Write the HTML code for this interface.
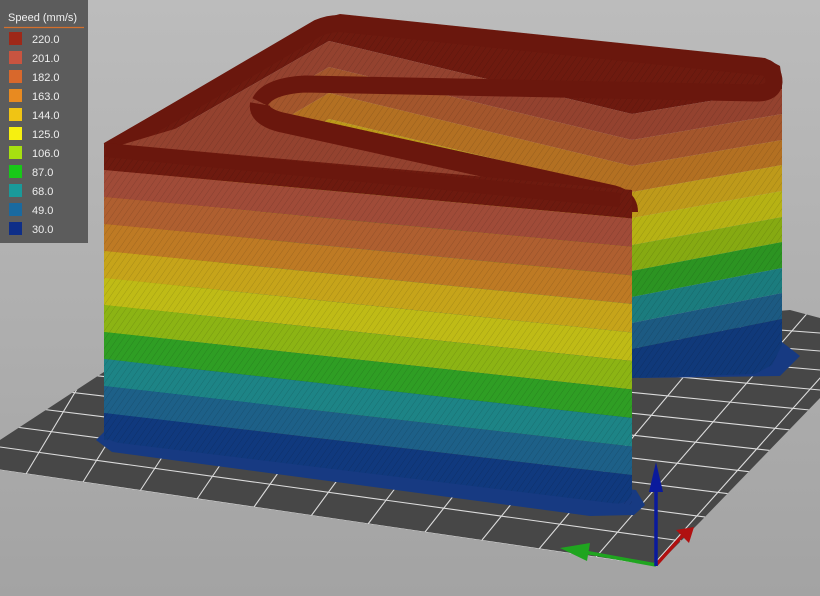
<!DOCTYPE html>
<html><head><meta charset="utf-8"><style>
html,body{margin:0;padding:0;width:820px;height:596px;overflow:hidden;background:#aaa}
svg{display:block}
</style></head><body>
<svg width="820" height="596" viewBox="0 0 820 596" xmlns="http://www.w3.org/2000/svg" font-family="Liberation Sans, sans-serif">
<defs>
<linearGradient id="bg" x1="0" y1="0" x2="0" y2="1"><stop offset="0" stop-color="#bcbcbc"/><stop offset="1" stop-color="#a3a3a3"/></linearGradient>
<clipPath id="plate"><polygon points="0,440 110,368 790,310 820,318 820,398 700,522 656,566 0,470"/></clipPath>
<clipPath id="sil"><polygon points="104,143 318,20 340,14 765,58 780,66 782,80 782,345 772,365 755,374 632,378 632,505 104,440"/></clipPath>
<pattern id="hatch" width="5" height="5" patternUnits="userSpaceOnUse" patternTransform="rotate(35)"><line x1="0" y1="0" x2="0" y2="5" stroke="#000" stroke-width="0.7" opacity="0.22"/></pattern>
</defs>
<rect width="820" height="596" fill="url(#bg)"/>
<polygon points="0,440 110,368 790,310 820,318 820,398 700,522 656,566 0,470" fill="#474747"/>
<g clip-path="url(#plate)" stroke="#dcdcdc" stroke-width="1.1" fill="none">
<line x1="0" y1="470" x2="820" y2="590"/><line x1="0" y1="447" x2="820" y2="560"/><line x1="0" y1="425" x2="820" y2="532"/><line x1="0" y1="404" x2="820" y2="505"/><line x1="0" y1="384" x2="820" y2="480"/><line x1="0" y1="365" x2="820" y2="456"/><line x1="0" y1="347" x2="820" y2="433"/><line x1="0" y1="330" x2="820" y2="411"/><line x1="0" y1="314" x2="820" y2="390"/><line x1="0" y1="299" x2="820" y2="370"/><line x1="0" y1="285" x2="820" y2="351"/><line x1="0" y1="272" x2="820" y2="333"/>
<line x1="26" y1="474" x2="206" y2="174"/><line x1="83" y1="482" x2="271" y2="182"/><line x1="140" y1="491" x2="336" y2="191"/><line x1="197" y1="499" x2="401" y2="199"/><line x1="254" y1="507" x2="466" y2="207"/><line x1="311" y1="516" x2="531" y2="216"/><line x1="368" y1="524" x2="596" y2="224"/><line x1="425" y1="532" x2="661" y2="232"/><line x1="482" y1="540" x2="726" y2="240"/><line x1="539" y1="549" x2="791" y2="249"/><line x1="596" y1="557" x2="856" y2="257"/><line x1="653" y1="565" x2="921" y2="265"/><line x1="710" y1="574" x2="986" y2="274"/><line x1="767" y1="582" x2="1051" y2="282"/>
</g>
<!-- brim -->
<polygon points="96,440 104,432 636,490 645,505 634,515 590,516 112,452" fill="#173a82"/>
<polygon points="628,372 782,342 800,356 780,376 640,378" fill="#173a82"/>
<g clip-path="url(#sil)">
<polygon points="104,-50 329,-50 632,-50 782,-50 782,89 632,114 329,41 104,170" fill="#6e1a0f"/>
<polygon points="104,170 329,41 632,114 782,89 782,114 632,140 329,67 104,197" fill="#94422f"/>
<polygon points="104,197 329,67 632,140 782,114 782,140 632,166 329,93 104,224" fill="#a4562c"/>
<polygon points="104,224 329,93 632,166 782,140 782,165 632,192 329,119 104,251" fill="#b37022"/>
<polygon points="104,251 329,119 632,192 782,165 782,191 632,218 329,145 104,278" fill="#be9a1a"/>
<polygon points="104,278 329,145 632,218 782,191 782,217 632,245 329,171 104,305" fill="#b6b214"/>
<polygon points="104,305 329,171 632,245 782,217 782,242 632,271 329,197 104,332" fill="#86aa12"/>
<polygon points="104,332 329,197 632,271 782,242 782,268 632,297 329,223 104,359" fill="#2c9422"/>
<polygon points="104,359 329,223 632,297 782,268 782,293 632,323 329,249 104,386" fill="#1b7c7e"/>
<polygon points="104,386 329,249 632,323 782,293 782,319 632,349 329,275 104,413" fill="#1c5a82"/>
<polygon points="104,413 329,275 632,349 782,319 782,400 632,420 329,400 104,440" fill="#10397a"/>
<rect width="820" height="596" fill="url(#hatch)"/>
</g>
<path d="M108,151 L318,28 Q332,22 346,24 L764,67 Q774,70 774,82 Q773,93 757,93 L305,84 Q268,86 260,102" fill="none" stroke="#6a170d" stroke-width="17" stroke-linejoin="round"/>
<polygon points="252,106 620,208 632,225 632,200 104,150" fill="#94422f"/>
<polygon points="252,106 632,216 632,200 104,150" fill="url(#hatch)"/>
<path d="M260,104 Q258,116 280,122 L612,195 Q628,199 628,212" fill="none" stroke="#6a170d" stroke-width="20" stroke-linejoin="round"/>
<g>
<polygon points="104,143 632,190 632,218.5 104,170" fill="#6e1a0f"/>
<polygon points="104,170 632,218.5 632,247 104,197" fill="#a04b38"/>
<polygon points="104,197 632,247 632,275.5 104,224" fill="#af5f30"/>
<polygon points="104,224 632,275.5 632,304 104,251" fill="#be7a24"/>
<polygon points="104,251 632,304 632,332.5 104,278" fill="#c6a41a"/>
<polygon points="104,278 632,332.5 632,361 104,305" fill="#bfbb16"/>
<polygon points="104,305 632,361 632,389.5 104,332" fill="#8cb414"/>
<polygon points="104,332 632,389.5 632,418 104,359" fill="#2f9e24"/>
<polygon points="104,359 632,418 632,446.5 104,386" fill="#1d8486"/>
<polygon points="104,386 632,446.5 632,475 104,413" fill="#1d6088"/>
<path d="M104,413 L632,475 L632,492 Q630,504 615,503.5 L120,443 Q105,441 104,430 Z" fill="#10397e"/>
<path d="M104,143 L632,190 L632,492 Q630,504 615,503.5 L120,443 Q105,441 104,430 Z" fill="url(#hatch)"/>
<path d="M106,150 L620,200" stroke="#6a170d" stroke-width="14" fill="none"/>
</g>
<line x1="656" y1="565" x2="584" y2="552" stroke="#1fa51f" stroke-width="3.5"/>
<polygon points="590,543 560,548 587,561" fill="#1fa51f"/>
<line x1="656" y1="565" x2="683" y2="535" stroke="#b01010" stroke-width="3.5"/>
<polygon points="676,530 694,527 689,543" fill="#b01010"/>
<line x1="656" y1="566" x2="656" y2="488" stroke="#0a1a9c" stroke-width="3.5"/>
<polygon points="649,492 656,462 663,492" fill="#0a1a9c"/>
<rect x="0" y="0" width="88" height="243" fill="#5c5c5c"/>
<text x="8" y="21" font-size="11" fill="#f0f0f0">Speed (mm/s)</text>
<line x1="4" y1="27.5" x2="84" y2="27.5" stroke="#d4702c" stroke-width="1.2"/>
<g font-size="11" fill="#eeeeee">
<rect x="9" y="32" width="13" height="13" fill="#9e2818"/><text x="32" y="43">220.0</text>
<rect x="9" y="51" width="13" height="13" fill="#c85440"/><text x="32" y="62">201.0</text>
<rect x="9" y="70" width="13" height="13" fill="#d8682c"/><text x="32" y="81">182.0</text>
<rect x="9" y="89" width="13" height="13" fill="#e88a20"/><text x="32" y="100">163.0</text>
<rect x="9" y="108" width="13" height="13" fill="#f0c414"/><text x="32" y="119">144.0</text>
<rect x="9" y="127" width="13" height="13" fill="#f6f010"/><text x="32" y="138">125.0</text>
<rect x="9" y="146" width="13" height="13" fill="#a6e010"/><text x="32" y="157">106.0</text>
<rect x="9" y="165" width="13" height="13" fill="#18c818"/><text x="32" y="176">87.0</text>
<rect x="9" y="184" width="13" height="13" fill="#1a9a9a"/><text x="32" y="195">68.0</text>
<rect x="9" y="203" width="13" height="13" fill="#1a6aa0"/><text x="32" y="214">49.0</text>
<rect x="9" y="222" width="13" height="13" fill="#0e2e88"/><text x="32" y="233">30.0</text>
</g>
</svg>
</body></html>
